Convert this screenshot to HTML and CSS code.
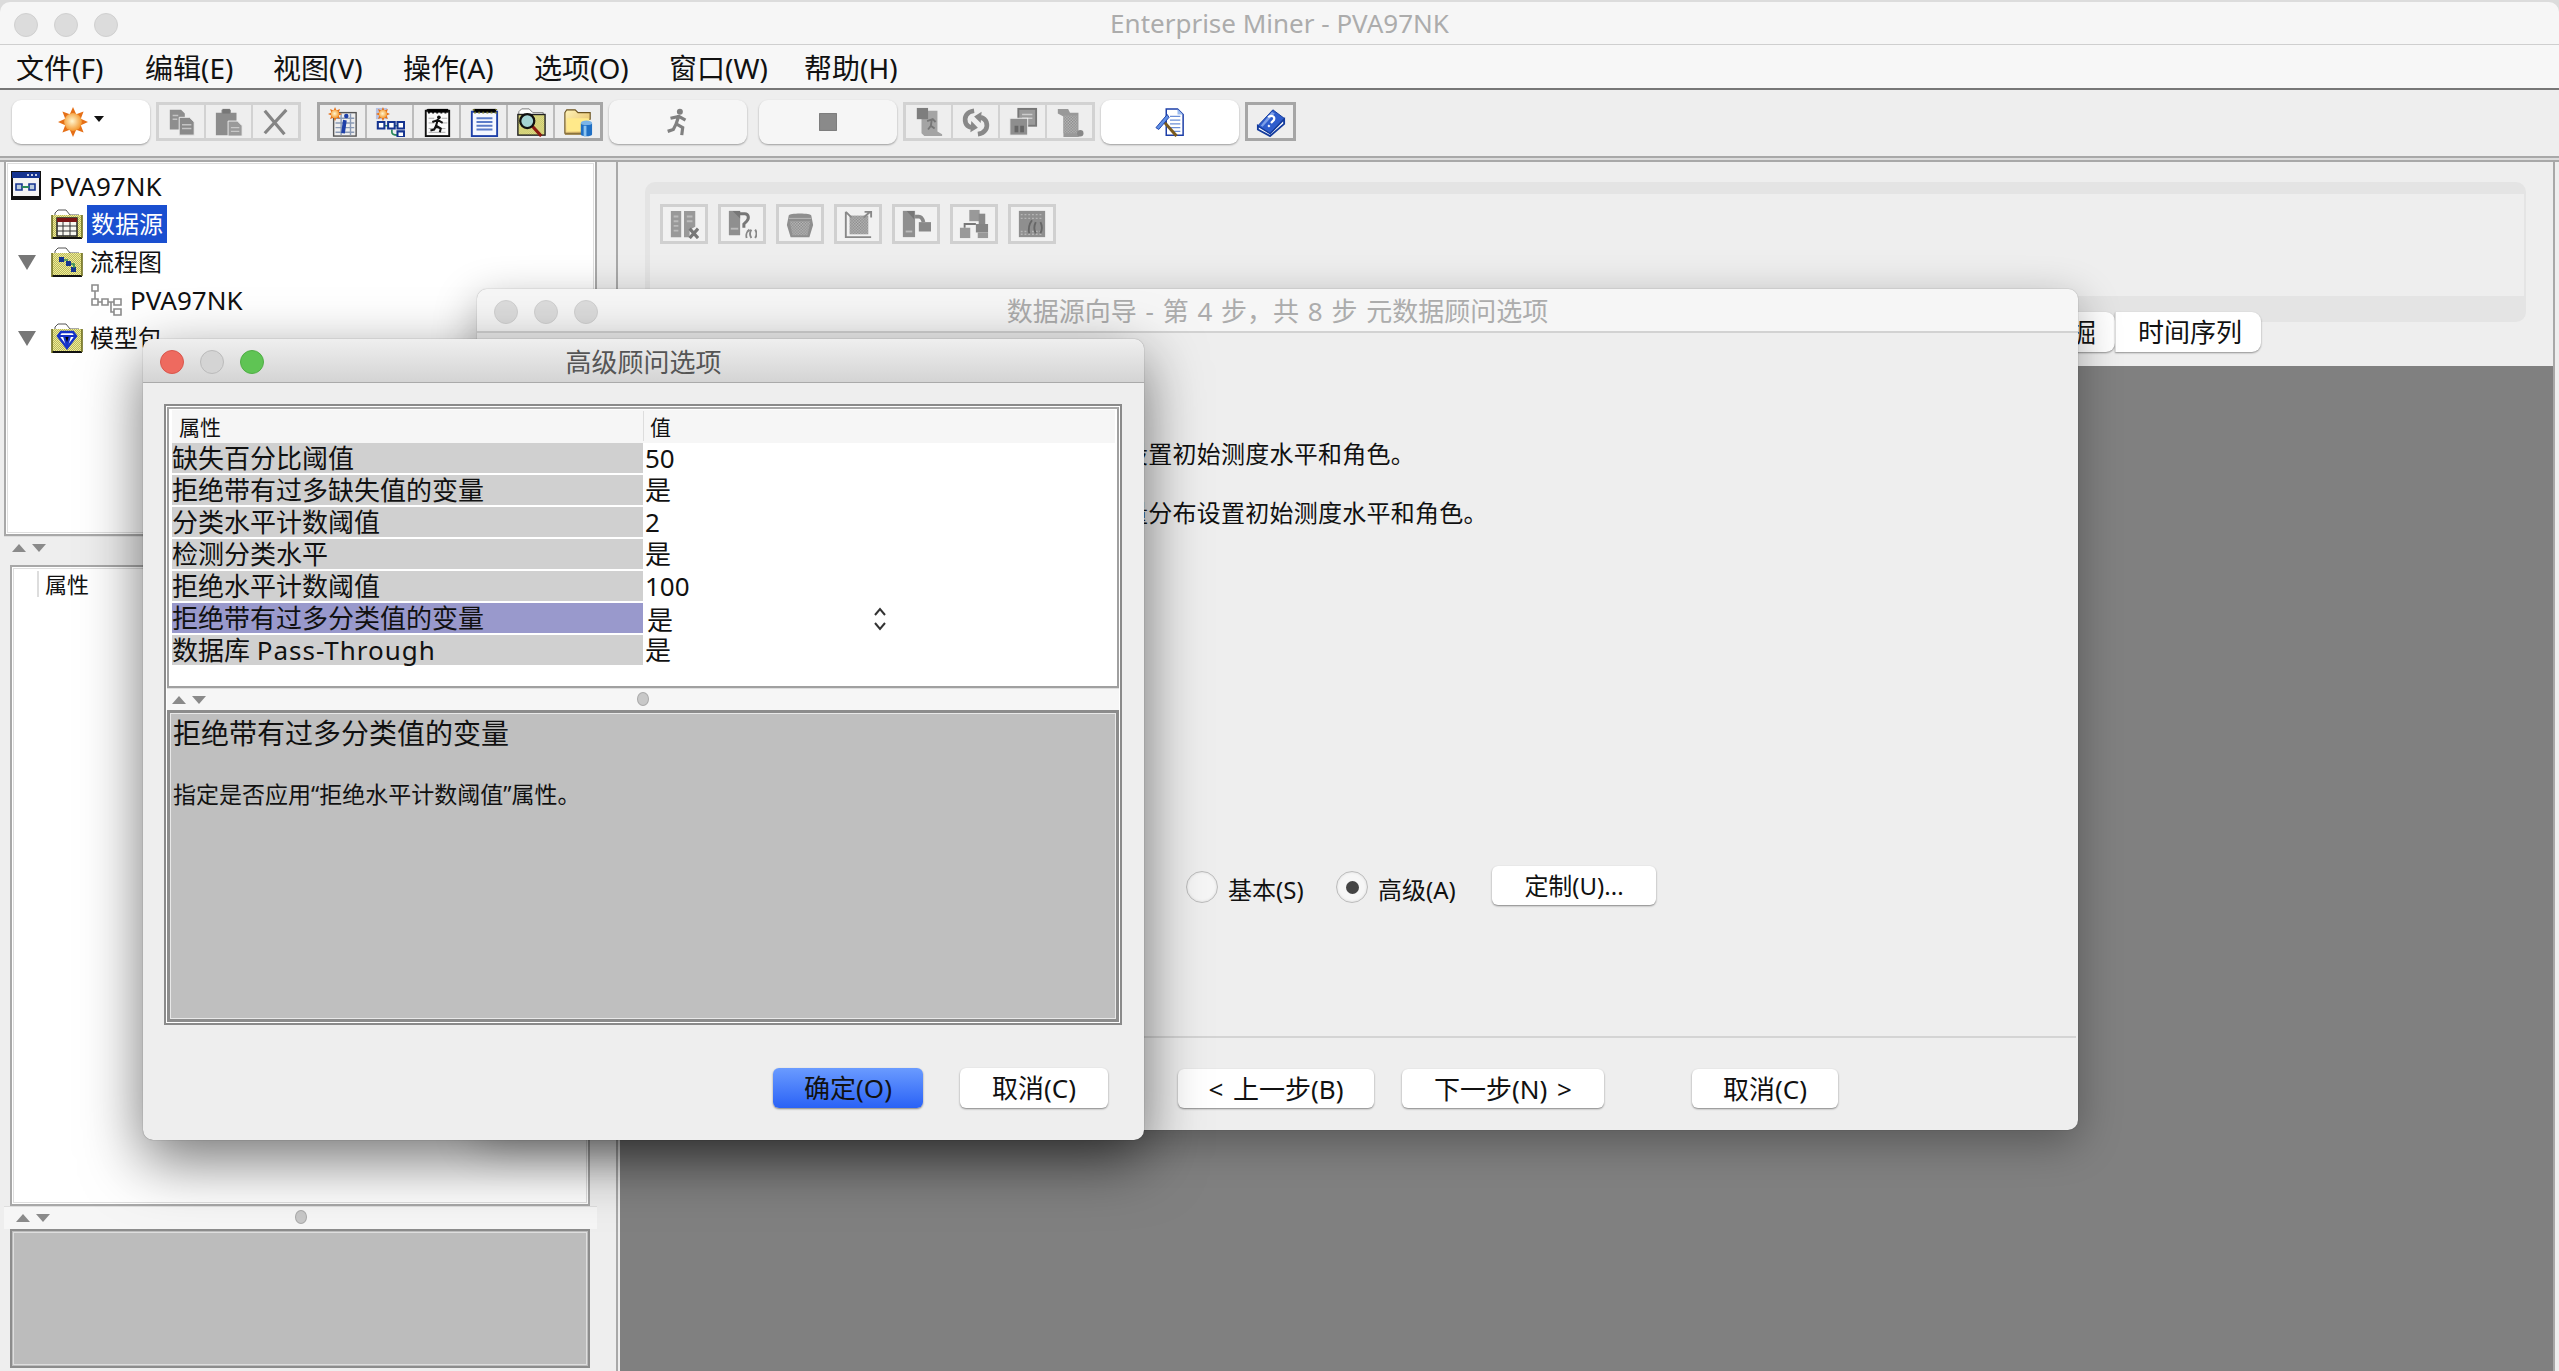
FILE: index.html
```html
<!DOCTYPE html>
<html lang="zh-CN">
<head>
    <meta charset="UTF-8">
    <title>Enterprise Miner - PVA97NK</title>
    <link rel="stylesheet" href="styles.css">
</head>
<body>

<!-- Icon sheet -->
<svg class="icon-sheet" xmlns="http://www.w3.org/2000/svg">
    <defs>
        <radialGradient id="sun-core" cx="45%" cy="45%" r="60%">
            <stop offset="0" stop-color="#fff6cf"/>
            <stop offset="1" stop-color="#f39022"/>
        </radialGradient>
        <linearGradient id="folder-tan" x1="0" y1="0" x2="1" y2="1">
            <stop offset="0" stop-color="#fff3b8"/>
            <stop offset="1" stop-color="#e2b75c"/>
        </linearGradient>
        <pattern id="check-yellow" width="2" height="2" patternUnits="userSpaceOnUse">
            <rect width="2" height="2" fill="#f4f08c"/>
            <rect width="1" height="1" fill="#b4b468"/>
            <rect x="1" y="1" width="1" height="1" fill="#b4b468"/>
        </pattern>
        <pattern id="check-gray" width="3" height="3" patternUnits="userSpaceOnUse">
            <rect width="3" height="3" fill="#bcbcbc"/>
            <rect width="1.5" height="1.5" fill="#868686"/>
            <rect x="1.5" y="1.5" width="1.5" height="1.5" fill="#868686"/>
        </pattern>
    </defs>

    <symbol id="ic-sun" viewBox="0 0 32 32">
        <polygon fill="#e56f17" points="16,0 19.4,7.7 27.3,4.7 24.3,12.6 32,16 24.3,19.4 27.3,27.3 19.4,24.3 16,32 12.6,24.3 4.7,27.3 7.7,19.4 0,16 7.7,12.6 4.7,4.7 12.6,7.7"/>
        <circle cx="16" cy="16" r="9.5" fill="url(#sun-core)"/>
    </symbol>
    <symbol id="ic-copy" viewBox="0 0 32 32">
        <path fill="#8e8e8e" d="M3 3h12l4 4v17H3z"/>
        <path fill="#8a8a8a" stroke="#eee" d="M13 11h11l5 5v14H13z"/>
        <path stroke="#c4c4c4" stroke-width="1.5" d="M16 19h10M16 23h10M6 9h6M6 13h5"/>
    </symbol>
    <symbol id="ic-paste" viewBox="0 0 32 32">
        <path fill="#8c8c8c" d="M2 6h6V3h10v3h6v24H2z"/>
        <rect x="9" y="2" width="8" height="5" fill="#777"/>
        <path fill="#9a9a9a" stroke="#eee" d="M15 15h10l5 5v11H15z"/>
        <path stroke="#c8c8c8" stroke-width="1.5" d="M18 22h9M18 26h9"/>
    </symbol>
    <symbol id="ic-x" viewBox="0 0 32 32">
        <path stroke="#858585" stroke-width="3.4" fill="none" d="M4 4 L25 29M27 3 L4 28"/>
    </symbol>
    <symbol id="ic-run" viewBox="0 0 32 32">
        <circle cx="18" cy="5" r="3.2" fill="currentColor"/>
        <path stroke="currentColor" stroke-width="3.4" fill="none" d="M8 12l9-2 7 4M17 9l-3 9 7 4-1 8M14 18l-3 6-6 2"/>
    </symbol>
    <symbol id="ic-stop" viewBox="0 0 32 32">
        <rect x="7" y="7" width="18" height="18" fill="#8a8a8a" stroke="#777"/>
    </symbol>
    <symbol id="ic-info" viewBox="0 0 32 32">
        <rect x="6" y="6" width="24" height="25" fill="#eee" stroke="#555" stroke-width="1.5"/>
        <path stroke="#8a9ab5" stroke-width="1.5" d="M8 12h20M8 17h20M8 22h20M8 27h20M14 7v23M24 7v23"/>
        <path stroke="#1d3fa8" stroke-width="4" d="M18 14l-2 14"/>
        <circle cx="19.5" cy="9.5" r="2.4" fill="#1d3fa8"/>
        <use href="#ic-sun" x="0" y="0" width="15" height="15"/>
    </symbol>
    <symbol id="ic-flow" viewBox="0 0 32 32">
        <rect x="1" y="1" width="12" height="12" fill="#b7c2e2"/>
        <use href="#ic-sun" x="1" y="0" width="15" height="15"/>
        <path stroke="#2b8a5a" stroke-width="1.8" fill="none" d="M10 20h4M20 20h4M18 24v3c0 2 2 3 6 3"/>
        <path fill="#fff" stroke="#14338f" stroke-width="2.2" d="M3 16h7v7H3zM14 16h7v7h-7zM24 16h7v7h-7zM24 26h7v6h-7z"/>
    </symbol>
    <symbol id="ic-note" viewBox="0 0 32 32">
        <rect x="4" y="4" width="25" height="27" fill="#fbfbfb" stroke="#111" stroke-width="2"/>
        <path stroke="#111" stroke-width="2" stroke-dasharray="2 2.4" d="M6 2v4h22V2"/>
        <path stroke="#aaa" d="M7 12h6M21 12h6M7 17h6M21 17h6M7 23h18M7 27h18"/>
        <circle cx="18" cy="11" r="2" fill="#111"/>
        <path stroke="#111" stroke-width="2.2" fill="none" d="M11 16l6-2 5 3M17 13l-2 7 5 3-1 4M15 20l-2 4-4 1"/>
    </symbol>
    <symbol id="ic-list" viewBox="0 0 32 32">
        <rect x="3" y="5" width="27" height="26" fill="#f4f7ff" stroke="#1d3fa8" stroke-width="2"/>
        <path stroke="#7a7a30" stroke-width="2" stroke-dasharray="2 2.4" d="M5 2v4h24V2"/>
        <path stroke="#5a7bc8" stroke-width="2" d="M8 12h17M8 16h17M8 20h17M8 24h17"/>
    </symbol>
    <symbol id="ic-find" viewBox="0 0 32 32">
        <path fill="#fff" stroke="#777" d="M3 9V5l3-3h8l4 4h11v3z"/>
        <rect x="2" y="8" width="29" height="22" fill="url(#check-yellow)" stroke="#222" stroke-width="1.5"/>
        <path stroke="#8b1a10" stroke-width="3.4" d="M17 20l10 11"/>
        <circle cx="12" cy="15" r="7.5" fill="#a5d4d4" stroke="#111" stroke-width="2.4"/>
    </symbol>
    <symbol id="ic-open" viewBox="0 0 32 32">
        <path fill="url(#folder-tan)" stroke="#6b5320" stroke-width="1.2" d="M2 28V6l2-3h9l3 3h13v7h-2v15z"/>
        <path fill="#ffe98a" d="M4 26V12h24v14z"/>
        <path stroke="#8d6f2a" stroke-width="1.2" d="M2 29h18"/>
        <ellipse cx="25" cy="17" rx="6" ry="2.5" fill="#7ab4e8"/>
        <path fill="#1f6fc4" d="M19 17v12c0 3 12 3 12 0V17c0 3-12 3-12 0z"/>
        <path fill="#8cc4f0" d="M22 20h3v11h-3z"/>
    </symbol>
    <symbol id="ic-g-page" viewBox="0 0 32 32">
        <path fill="#a4a4a4" d="M8 4h17v22l5 3v2H11l-3-3z"/>
        <rect x="3" y="1" width="12" height="12" fill="#7e7e7e"/>
        <path stroke="#777" stroke-width="2" fill="none" d="M14 15l6-2 3 3M19 13l-1 7 4 3M18 20l-3 4"/>
    </symbol>
    <symbol id="ic-g-sync" viewBox="0 0 32 32">
        <path fill="none" stroke="#888" stroke-width="5" d="M14 4C6 5 3 11 5 17c1 3 3 4 6 5M18 29c8-1 11-7 9-13-1-3-3-4-6-5"/>
        <path fill="#888" d="M11 15l7 7-8 5zM21 17l-7-7 8-5z"/>
    </symbol>
    <symbol id="ic-g-win" viewBox="0 0 32 32">
        <rect x="11" y="2" width="19" height="18" fill="#9a9a9a" stroke="#777" stroke-width="2"/>
        <path stroke="#ccc" stroke-width="1.5" d="M15 8h11M15 12h11"/>
        <rect x="2" y="12" width="19" height="18" fill="#8e8e8e" stroke="#eee"/>
        <rect x="7" y="20" width="4" height="7" fill="#666"/>
        <rect x="13" y="20" width="4" height="7" fill="#666"/>
    </symbol>
    <symbol id="ic-g-map" viewBox="0 0 32 32">
        <path fill="#999" d="M3 2h11l2 4h9v22l3 2-3 2H9V10L3 7z"/>
        <path fill="url(#check-gray)" d="M9 9h15v19H9z"/>
        <circle cx="27" cy="28" r="3.4" fill="#888"/>
    </symbol>
    <symbol id="ic-build" viewBox="0 0 32 32">
        <path fill="#fff" stroke="#1d3fa8" stroke-width="1.6" d="M12 2h12l6 6v22H12z"/>
        <path fill="#9cbcf0" d="M24 2v6h6z"/>
        <path stroke="#6b8fd8" stroke-width="1.5" d="M16 10h11M16 14h11M16 18h11M16 22h11M18 26h9"/>
        <path stroke="#7a5a1e" stroke-width="3.2" d="M8 14l15 17"/>
        <path fill="#5f90e6" stroke="#1d3fa8" d="M1 22L13 8l2 3L4 24z"/>
    </symbol>
    <symbol id="ic-help" viewBox="0 0 32 32">
        <path fill="#fff" stroke="#123a9c" stroke-width="2" d="M2 20l13 8 15-15v5L15 31 2 24z"/>
        <path fill="#2f5dcc" stroke="#123a9c" d="M2 20L18 3l12 9-15 16z"/>
        <path fill="#7d9fe8" d="M17 5l3 2-13 14-2-1z"/>
        <path stroke="#fff" stroke-width="2.4" fill="none" d="M13 11c3-3 8-1 6 3l-3 3M13 21l1.500-1.500"/>
    </symbol>
    <symbol id="ic-p-split" viewBox="0 0 32 32">
        <path fill="#999" d="M2 2h11v28H2zM16 2h12v17l-6 3v8h-6z"/>
        <path stroke="#bbb" stroke-width="2" d="M5 8h5M5 13h5M5 18h5M5 23h5M19 8h6M19 13h6"/>
        <path stroke="#777" stroke-width="3.4" d="M22 21l9 10M31 21l-9 10"/>
    </symbol>
    <symbol id="ic-p-fx" viewBox="0 0 32 32">
        <path fill="#8f8f8f" d="M2 2h12v26H2z"/>
        <path fill="#777" d="M6 2h8v8z"/>
        <path stroke="#bbb" stroke-width="2" d="M4 21h8"/>
        <path fill="none" stroke="#777" stroke-width="3.2" d="M13 5h6c4 0 5 5 2 8l-3 3v4"/>
        <path fill="none" stroke="#888" stroke-width="2" d="M21 31c-1-3 0-7 3-9M26 22c-2 3-2 6 0 9M30 22c2 3 2 6 0 9"/>
    </symbol>
    <symbol id="ic-p-pot" viewBox="0 0 32 32">
        <path fill="#8e8e8e" d="M4 7c0-3 24-3 24 0l2 10-4 13H6L2 17z"/>
        <path fill="url(#check-gray)" d="M5 13h22l-3 15H8z"/>
        <path stroke="#bbb" d="M4 10h24"/>
    </symbol>
    <symbol id="ic-p-frame" viewBox="0 0 32 32">
        <path fill="url(#check-gray)" d="M7 7h20v20H7z"/>
        <path stroke="#888" stroke-width="2" fill="none" d="M3 3v27h27M3 3l6 6M29 3l-7 6M23 3h7v6"/>
    </symbol>
    <symbol id="ic-p-move" viewBox="0 0 32 32">
        <path fill="#8f8f8f" d="M2 2h13v28H2z"/>
        <path fill="#777" d="M6 2h8v9z"/>
        <path stroke="#bbb" stroke-width="2" d="M5 24h7"/>
        <path fill="none" stroke="#888" stroke-width="4" d="M15 8h4c3 0 4 2 5 6"/>
        <path fill="#888" d="M19 14h13v10H19z"/>
    </symbol>
    <symbol id="ic-p-nodes" viewBox="0 0 32 32">
        <rect x="11" y="1" width="11" height="12" fill="#999"/>
        <rect x="21" y="5" width="7" height="14" fill="#8a8a8a"/>
        <rect x="1" y="20" width="11" height="11" fill="#999"/>
        <rect x="18" y="16" width="13" height="9" fill="#858585"/>
        <rect x="20" y="25" width="11" height="6" fill="#999"/>
        <path stroke="#777" stroke-width="2" fill="none" d="M6 20v-4h12"/>
    </symbol>
    <symbol id="ic-p-func" viewBox="0 0 32 32">
        <rect x="2" y="2" width="28" height="28" fill="#8f8f8f"/>
        <path stroke="#b5b5b5" stroke-width="1.5" stroke-dasharray="2 2" d="M4 6h24M4 10h24M4 24h24M4 27h24"/>
        <path fill="none" stroke="#666" stroke-width="2" d="M13 26c-1-5 0-10 3-14M20 14c-2 4-2 8 0 12M25 14c2 4 2 8 0 12"/>
    </symbol>
    <symbol id="ic-project" viewBox="0 0 32 32">
        <rect x="1" y="2" width="28" height="27" fill="#f4f4f4" stroke="#111" stroke-width="2"/>
        <rect x="1" y="2" width="28" height="6" fill="#14338f"/>
        <path stroke="#fff" stroke-width="1.4" stroke-dasharray="2 2" d="M16 5h12"/>
        <path stroke="#14338f" stroke-width="1.6" fill="#bcd" d="M5 14h6v6H5zM18 14h6v6h-6z"/>
        <path stroke="#2b8a5a" stroke-width="2" d="M11 17h7"/>
        <path stroke="#111" stroke-width="2" d="M2 27h27"/>
    </symbol>
    <symbol id="ic-folder" viewBox="0 0 32 32">
        <path fill="#fff" stroke="#555" d="M4 8V5l3-3h8l4 5h9v2z"/>
        <rect x="1" y="7" width="30" height="24" fill="url(#check-yellow)"/>
        <path stroke="#111" stroke-width="2" d="M1 30h30"/>
        <path stroke="#6e6e20" stroke-width="1.6" d="M1 7v24M31 7v23"/>
    </symbol>
    <symbol id="ic-data" viewBox="0 0 32 32">
        <use href="#ic-folder" width="32" height="32"/>
        <rect x="6" y="10" width="20" height="18" fill="#f7f7f0" stroke="#222" stroke-width="1.5"/>
        <rect x="6" y="10" width="20" height="4" fill="#7a1616"/>
        <path stroke="#333" d="M6 18h20M6 23h20M12 14v14M19 14v14"/>
    </symbol>
    <symbol id="ic-flowdir" viewBox="0 0 32 32">
        <use href="#ic-folder" width="32" height="32"/>
        <path fill="#14338f" d="M8 11h5v5H8zM15 15h5v5h-5zM20 21h5v5h-5z"/>
        <path stroke="#2b8a5a" stroke-width="1.6" fill="none" d="M13 14h4M20 18h3v4"/>
    </symbol>
    <symbol id="ic-model" viewBox="0 0 32 32">
        <use href="#ic-folder" width="32" height="32"/>
        <path fill="#fff" stroke="#1432c8" stroke-width="2.4" d="M7 14l3-4h12l3 4-9 12z"/>
        <path stroke="#1432c8" stroke-width="2.2" d="M7 14h18M13 14l3 10 3-10"/>
    </symbol>
    <symbol id="ic-diagram" viewBox="0 0 32 32">
        <path fill="#fff" stroke="#8c8c8c" stroke-width="1.6" d="M1 1h6v6H1zM1 15h6v6H1zM11 15h6v6h-6zM23 15h7v6h-7zM23 25h7v6h-7z"/>
        <path stroke="#8c8c8c" stroke-width="1.6" fill="none" d="M4 7v8M7 18h4M17 18h6M20 18v10h3"/>
    </symbol>
</svg>

<div class="app">
    <div class="app-title">
        <div class="lights">
            <span class="light"></span><span class="light"></span><span class="light"></span>
        </div>
        <span class="title-text">Enterprise Miner - PVA97NK</span>
    </div>

    <nav class="menubar">
        <span class="menu-item">文件(F)</span>
        <span class="menu-item">编辑(E)</span>
        <span class="menu-item">视图(V)</span>
        <span class="menu-item">操作(A)</span>
        <span class="menu-item">选项(O)</span>
        <span class="menu-item">窗口(W)</span>
        <span class="menu-item">帮助(H)</span>
    </nav>

    <div class="toolbar">
        <div class="pill pill-on">
            <svg class="pill-icon"><use href="#ic-sun"/></svg><span class="drop-arrow"></span>
        </div>
        <div class="tool-group">
            <span class="tool"><svg><use href="#ic-copy"/></svg></span>
            <span class="tool"><svg><use href="#ic-paste"/></svg></span>
            <span class="tool"><svg><use href="#ic-x"/></svg></span>
        </div>
        <div class="tool-group tool-group-on group-gap">
            <span class="tool"><svg><use href="#ic-info"/></svg></span>
            <span class="tool"><svg><use href="#ic-flow"/></svg></span>
            <span class="tool"><svg><use href="#ic-note"/></svg></span>
            <span class="tool"><svg><use href="#ic-list"/></svg></span>
            <span class="tool"><svg><use href="#ic-find"/></svg></span>
            <span class="tool"><svg><use href="#ic-open"/></svg></span>
        </div>
        <div class="pill"><svg class="pill-icon run-icon"><use href="#ic-run"/></svg></div>
        <div class="pill pill-gap"><svg class="pill-icon"><use href="#ic-stop"/></svg></div>
        <div class="tool-group">
            <span class="tool"><svg><use href="#ic-g-page"/></svg></span>
            <span class="tool"><svg><use href="#ic-g-sync"/></svg></span>
            <span class="tool"><svg><use href="#ic-g-win"/></svg></span>
            <span class="tool"><svg><use href="#ic-g-map"/></svg></span>
        </div>
        <div class="pill pill-on"><svg class="pill-icon"><use href="#ic-build"/></svg></div>
        <div class="tool-group tool-group-on">
            <span class="tool"><svg><use href="#ic-help"/></svg></span>
        </div>
    </div>

    <div class="workspace">
        <!-- Left side: project tree, properties, help -->
        <aside class="side">
            <div class="pane tree-pane">
                <div class="tree-row">
                    <svg class="tree-icon"><use href="#ic-project"/></svg>
                    <span class="tree-label tree-latin">PVA97NK</span>
                </div>
                <div class="tree-row indent-1">
                    <svg class="tree-icon"><use href="#ic-data"/></svg>
                    <span class="tree-label selected">数据源</span>
                </div>
                <div class="tree-row">
                    <span class="twist"></span>
                    <svg class="tree-icon"><use href="#ic-flowdir"/></svg>
                    <span class="tree-label">流程图</span>
                </div>
                <div class="tree-row indent-2">
                    <svg class="tree-icon"><use href="#ic-diagram"/></svg>
                    <span class="tree-label tree-latin">PVA97NK</span>
                </div>
                <div class="tree-row">
                    <span class="twist"></span>
                    <svg class="tree-icon"><use href="#ic-model"/></svg>
                    <span class="tree-label">模型包</span>
                </div>
            </div>
            <div class="split split-side">
                <span class="arrow-up"></span><span class="arrow-down"></span>
            </div>
            <div class="pane props-pane">
                <div class="props-head"><span class="props-title">属性</span></div>
            </div>
            <div class="split split-side split-low">
                <span class="arrow-up"></span><span class="arrow-down"></span>
                <span class="knob"></span>
            </div>
            <div class="pane help-pane"></div>
        </aside>

        <!-- Right side: node palette, tabs, diagram -->
        <main class="main">
            <div class="palette">
                <div class="palette-inner">
                    <span class="pal-btn"><svg><use href="#ic-p-split"/></svg></span>
                    <span class="pal-btn"><svg><use href="#ic-p-fx"/></svg></span>
                    <span class="pal-btn"><svg><use href="#ic-p-pot"/></svg></span>
                    <span class="pal-btn"><svg><use href="#ic-p-frame"/></svg></span>
                    <span class="pal-btn"><svg><use href="#ic-p-move"/></svg></span>
                    <span class="pal-btn"><svg><use href="#ic-p-nodes"/></svg></span>
                    <span class="pal-btn"><svg><use href="#ic-p-func"/></svg></span>
                </div>
            </div>
            <div class="tabs">
                <span class="tab">数据挖掘</span>
                <span class="tab">时间序列</span>
            </div>
            <div class="diagram"></div>
        </main>
    </div>
</div>

<!-- Wizard window -->
<section class="window wizard">
    <div class="win-title win-title-off">
        <div class="lights">
            <span class="light"></span><span class="light"></span><span class="light"></span>
        </div>
        <span class="title-text">数据源向导 - 第 4 步，共 8 步 元数据顾问选项</span>
    </div>
    <div class="wizard-body">
        <p class="wizard-line">设置初始测度水平和角色。</p>
        <p class="wizard-line">量分布设置初始测度水平和角色。</p>
        <div class="radio-row">
            <span class="radio"></span><span class="radio-label">基本(S)</span>
            <span class="radio radio-on"></span><span class="radio-label">高级(A)</span>
            <span class="btn btn-custom">定制(U)...</span>
        </div>
    </div>
    <div class="wizard-foot">
        <span class="btn btn-back">&lt; 上一步(B)</span>
        <span class="btn btn-next">下一步(N) &gt;</span>
        <span class="btn btn-cancel">取消(C)</span>
    </div>
</section>

<!-- Advanced options dialog -->
<section class="window advanced">
    <div class="win-title">
        <div class="lights">
            <span class="light light-red"></span><span class="light light-off"></span><span class="light light-green"></span>
        </div>
        <span class="title-text">高级顾问选项</span>
    </div>
    <div class="adv-body">
        <div class="frame">
            <div class="prop-table">
                <div class="prop-head">
                    <span class="head-cell">属性</span>
                    <span class="head-cell head-value">值</span>
                </div>
                <div class="prop-row"><span class="prop-name">缺失百分比阈值</span><span class="prop-value">50</span></div>
                <div class="prop-row"><span class="prop-name">拒绝带有过多缺失值的变量</span><span class="prop-value">是</span></div>
                <div class="prop-row"><span class="prop-name">分类水平计数阈值</span><span class="prop-value">2</span></div>
                <div class="prop-row"><span class="prop-name">检测分类水平</span><span class="prop-value">是</span></div>
                <div class="prop-row"><span class="prop-name">拒绝水平计数阈值</span><span class="prop-value">100</span></div>
                <div class="prop-row prop-row-on">
                    <span class="prop-name">拒绝带有过多分类值的变量</span>
                    <span class="prop-value prop-combo">
                        <span class="combo-text">是</span>
                        <svg class="combo-arrows" viewBox="0 0 14 26"><path fill="none" stroke="#333" stroke-width="2" d="M2 9l5-6 5 6M2 17l5 6 5-6"/></svg>
                    </span>
                </div>
                <div class="prop-row"><span class="prop-name">数据库 <span class="latin">Pass-Through</span></span><span class="prop-value">是</span></div>
            </div>
            <div class="split split-adv">
                <span class="arrow-up"></span><span class="arrow-down"></span>
                <span class="knob"></span>
            </div>
            <div class="desc">
                <h4 class="desc-title">拒绝带有过多分类值的变量</h4>
                <p class="desc-text">指定是否应用“拒绝水平计数阈值”属性。</p>
            </div>
        </div>
        <div class="adv-foot">
            <span class="btn btn-primary">确定(O)</span>
            <span class="btn btn-adv-cancel">取消(C)</span>
        </div>
    </div>
</section>

</body>
</html>
```

FILE: styles.css
```css
/* General */
* {
    box-sizing: border-box;
}

html, body {
    margin: 0;
    padding: 0;
    height: 100%;
    overflow: hidden;
}

body {
    background: #dcdcdc;
    color: #111;
    font-family: "Noto Sans", "Noto Sans CJK SC", sans-serif;
    font-size: 24px;
    position: relative;
}

.icon-sheet {
    position: absolute;
    width: 0;
    height: 0;
}

svg {
    display: block;
}

.app {
    display: flex;
    flex-direction: column;
    height: 100%;
    padding-top: 2px;
}

/* Title bars */
.app-title {
    height: 43px;
    flex: none;
    display: flex;
    align-items: center;
    justify-content: center;
    position: relative;
    background: #f6f6f6;
    border-bottom: 1px solid #cfcfcf;
    border-radius: 10px 10px 0 0;
}

.lights {
    position: absolute;
    left: 14px;
    top: 11px;
    display: flex;
    gap: 16px;
}

.light {
    width: 24px;
    height: 24px;
    border-radius: 50%;
    background: #dcdcdc;
    border: 1px solid #d0d0d0;
}

.light-red {
    background: #ee6a5f;
    border-color: #d9564c;
}

.light-off {
    background: #d4d4d4;
    border-color: #bbb;
}

.light-green {
    background: #5fc454;
    border-color: #4fae45;
}

.title-text {
    color: #acacac;
    font-size: 26px;
}

/* Menu */
.menubar {
    height: 45px;
    flex: none;
    display: flex;
    align-items: center;
    background: #f7f7f7;
    border-bottom: 2px solid #777;
    padding-left: 16px;
}

.menu-item {
    font-size: 28px;
    width: 131px;
}

.menu-item:nth-child(1) { width: 129px; }
.menu-item:nth-child(2) { width: 128px; }
.menu-item:nth-child(3) { width: 130px; }
.menu-item:nth-child(5) { width: 135px; }
.menu-item:nth-child(6) { width: 135px; }

/* Toolbar */
.toolbar {
    height: 68px;
    flex: none;
    display: flex;
    align-items: flex-start;
    gap: 6px;
    padding: 10px 0 0 12px;
    background: #eee;
    border-bottom: 2px solid #a8a8a8;
}

.pill {
    width: 138px;
    height: 44px;
    display: flex;
    align-items: center;
    justify-content: center;
    background: #f6f6f6;
    border-radius: 9px;
    box-shadow: 0 1px 2px rgba(0, 0, 0, 0.35);
}

.pill-on {
    background: #fff;
}

.pill-gap {
    margin-left: 6px;
}

.pill-icon {
    width: 30px;
    height: 30px;
}

.run-icon {
    color: #808080;
}

.drop-arrow {
    width: 0;
    height: 0;
    margin-left: 6px;
    margin-bottom: 6px;
    border-left: 5px solid transparent;
    border-right: 5px solid transparent;
    border-top: 6px solid #111;
}

.tool-group {
    display: flex;
    gap: 2px;
    margin-top: 2px;
    border: 3px solid #d2d2d2;
    background: #d2d2d2;
}

.tool-group-on {
    border-color: #a6a6a6;
    background: #bdbdbd;
}

.group-gap {
    margin-left: 10px;
}

.tool {
    width: 45px;
    height: 33px;
    display: flex;
    align-items: center;
    justify-content: center;
    background: #eee;
}

.tool svg {
    width: 30px;
    height: 30px;
}

/* Workspace */
.workspace {
    flex: 1;
    min-height: 0;
    display: flex;
    background: #eee;
    border-top: 2px solid #a8a8a8;
    margin-top: 2px;
}

.side {
    width: 593px;
    margin-left: 4px;
    margin-top: -2px;
    display: flex;
    flex-direction: column;
    padding-bottom: 3px;
}

.pane {
    border: 2px solid #a8a8a8;
    outline: 1px solid #dedede;
    outline-offset: -4px;
    background: #fff;
}

.tree-pane {
    height: 376px;
    padding: 5px 0 0 5px;
}

.tree-row {
    height: 38px;
    display: flex;
    align-items: center;
    padding-left: 40px;
}

.tree-row:first-child {
    padding-left: 0;
}

.tree-row:first-child .tree-label {
    margin-left: 4px;
}

.indent-2 {
    padding-left: 80px;
}

.tree-icon {
    width: 32px;
    height: 32px;
    flex: none;
}

.tree-label {
    margin-left: 5px;
    padding: 0 2px;
    line-height: 38px;
    font-size: 24px;
}

.tree-latin {
    font-size: 26px;
}

.selected {
    margin-left: 4px;
    padding: 0 4px;
    background: #1a4fd0;
    color: #fff;
}

.twist {
    width: 0;
    height: 0;
    margin-left: -33px;
    margin-right: 15px;
    border-left: 9px solid transparent;
    border-right: 9px solid transparent;
    border-top: 15px solid #777;
}

/* Splitters */
.split {
    display: flex;
    align-items: center;
    gap: 6px;
    position: relative;
    background: #f6f6f6;
    border-top: 1px solid #dedede;
}

.split-side {
    height: 29px;
    padding: 0 0 6px 8px;
    background: #eee;
}

.split-low {
    height: 23px;
    padding: 0 0 0 12px;
    background: #f6f6f6;
}

.arrow-up, .arrow-down {
    width: 0;
    height: 0;
    border-left: 7px solid transparent;
    border-right: 7px solid transparent;
}

.arrow-up {
    border-bottom: 8px solid #8a8a8a;
}

.arrow-down {
    border-top: 8px solid #8a8a8a;
}

.knob {
    position: absolute;
    left: calc(50% - 6px);
    top: 3px;
    width: 12px;
    height: 14px;
    border-radius: 50%;
    background: #c8c8c8;
    border: 1px solid #aaa;
}

.props-pane {
    height: 641px;
    margin-left: 6px;
    margin-right: 7px;
}

.props-head {
    padding: 0 0 0 25px;
}

.props-title {
    display: inline-block;
    border-left: 2px solid #ddd;
    padding-left: 6px;
    font-size: 22px;
    line-height: 26px;
}

.split-low + .help-pane {
    margin-left: 6px;
}

.help-pane {
    flex: 1;
    margin-right: 7px;
    background: #bcbcbc;
    border-color: #8c8c8c;
}

/* Main area */
.main {
    flex: 1;
    min-width: 0;
    margin: 0 4px 0 19px;
    display: flex;
    flex-direction: column;
    border-left: 2px solid #a8a8a8;
    border-right: 2px solid #a8a8a8;
}

.palette {
    height: 140px;
    flex: none;
    margin: 20px 27px 0 27px;
    padding: 12px 2px 26px 5px;
    background: #e4e4e4;
    border-radius: 10px;
}

.palette-inner {
    height: 102px;
    display: flex;
    align-items: flex-start;
    gap: 10px;
    padding: 10px 0 0 10px;
    background: #eee;
}

.pal-btn {
    width: 48px;
    height: 40px;
    display: flex;
    align-items: center;
    justify-content: center;
    background: #f1f1f1;
    border: 3px solid #d0d0d0;
}

.pal-btn svg {
    width: 30px;
    height: 30px;
}

.tabs {
    height: 40px;
    flex: none;
    display: flex;
    justify-content: flex-end;
    margin-top: -10px;
    padding-right: 292px;
    position: relative;
}

.tab {
    width: 146px;
    display: flex;
    align-items: center;
    justify-content: center;
    padding: 0 0 3px 3px;
    background: #fff;
    font-size: 26px;
    border-left: 1px solid #ddd;
    border-radius: 0 9px 9px 0;
    box-shadow: 0 1px 2px rgba(0, 0, 0, 0.4);
}

.diagram {
    flex: 1;
    margin-top: 14px;
    margin-left: 2px;
    background: #808080;
}

/* Windows */
.window {
    position: absolute;
    display: flex;
    flex-direction: column;
    background: #eee;
    border-radius: 10px;
}

.wizard {
    left: 477px;
    top: 289px;
    width: 1601px;
    height: 841px;
    box-shadow: 0 12px 44px rgba(0, 0, 0, 0.32), 0 0 1px rgba(0, 0, 0, 0.5);
}

.advanced {
    left: 143px;
    top: 339px;
    width: 1001px;
    height: 801px;
    box-shadow: 0 20px 60px rgba(0, 0, 0, 0.55), 0 0 1px rgba(0, 0, 0, 0.6);
}

.win-title {
    height: 44px;
    flex: none;
    display: flex;
    align-items: center;
    justify-content: center;
    position: relative;
    background: linear-gradient(#efefef, #d4d4d4);
    border-bottom: 1px solid #aaa;
    border-radius: 10px 10px 0 0;
}

.win-title .title-text {
    color: #555;
    font-size: 26px;
}

.win-title .lights {
    left: 17px;
    top: 11px;
}

.win-title-off {
    background: #f6f6f6;
    border-bottom: 2px solid #d2d2d2;
}

.win-title-off .title-text {
    color: #acacac;
    font-size: 26px;
    word-spacing: 2px;
}

.win-title-off .lights {
    left: 17px;
}

/* Wizard */
.wizard-body {
    flex: 1;
    padding: 104px 0 0 647px;
    border-bottom: 2px solid #d4d4d4;
    margin-right: 2px;
}

.wizard-line {
    margin: 0 0 26px;
    line-height: 33px;
    font-size: 24px;
    letter-spacing: 0.25px;
}

.radio-row {
    display: flex;
    align-items: center;
    margin: 339px 0 0 -447px;
    position: relative;
}

.radio {
    width: 32px;
    height: 32px;
    flex: none;
    display: flex;
    align-items: center;
    justify-content: center;
    background: #f6f6f6;
    border: 1px solid #bbb;
    border-radius: 50%;
    box-shadow: inset 0 0 3px rgba(0, 0, 0, 0.12);
}

.radio:first-child {
    margin-left: 509px;
}

.radio-on::after {
    content: "";
    width: 13px;
    height: 13px;
    border-radius: 50%;
    background: #444;
}

.radio-label {
    width: 118px;
    padding-left: 10px;
    margin-top: 3px;
    font-size: 24px;
}

.radio-label:nth-of-type(4) {
    width: 124px;
}

.btn {
    height: 39px;
    display: flex;
    align-items: center;
    justify-content: center;
    padding-bottom: 2px;
    background: #fff;
    font-size: 26px;
    word-spacing: 3px;
    border-radius: 6px;
    box-shadow: 0 1px 2px rgba(0, 0, 0, 0.45);
}

.btn-custom {
    width: 164px;
    margin-top: -4px;
    font-size: 24px;
}

.wizard-foot {
    height: 92px;
    flex: none;
    display: flex;
    padding: 31px 0 0 701px;
}

.btn-back {
    width: 196px;
    margin-right: 28px;
}

.btn-next {
    width: 202px;
    margin-right: 88px;
}

.btn-cancel {
    width: 146px;
}

/* Advanced dialog */
.adv-body {
    flex: 1;
    display: flex;
    flex-direction: column;
    padding: 21px 22px 0 21px;
}

.frame {
    height: 621px;
    flex: none;
    display: flex;
    flex-direction: column;
    border: 2px solid #8a8a8a;
    padding: 1px;
    background: #fff;
}

.prop-table {
    height: 281px;
    flex: none;
    padding: 1px 2px 0 3px;
    background: #fff;
    border: 2px solid #a0a0a0;
    border-top-color: #a8a8a8;
}

.prop-head {
    height: 33px;
    display: grid;
    grid-template-columns: 471px 1fr;
    align-items: center;
    padding-bottom: 2px;
    background: #f6f6f6;
    font-size: 21px;
}

.head-cell {
    padding-left: 7px;
}

.head-value {
    padding-left: 6px;
    border-left: 1px solid #ddd;
}

.prop-row {
    height: 30px;
    margin-bottom: 2px;
    display: grid;
    grid-template-columns: 471px 1fr;
    font-size: 26px;
    line-height: 30px;
}

.prop-name {
    background: #d0d0d0;
    white-space: nowrap;
}

.latin {
    letter-spacing: 1px;
}

.prop-value {
    padding-left: 2px;
}

.prop-row-on .prop-name {
    background: #9999cc;
}

.prop-combo {
    display: flex;
    align-items: center;
    padding: 0 0 0 4px;
}

.combo-text {
    width: 226px;
    line-height: 26px;
    margin-top: 3px;
}

.combo-arrows {
    width: 14px;
    height: 26px;
    margin-top: 2px;
}

.split-adv {
    height: 22px;
    flex: none;
    padding-left: 5px;
}

.desc {
    flex: 1;
    padding: 0 0 0 3px;
    background: #bfbfbf;
    border: 3px solid #8c8c8c;
    outline: 1px solid #e8e8e8;
    outline-offset: -4px;
}

.desc-title {
    margin: 0;
    font-size: 28px;
    font-weight: normal;
    line-height: 40px;
}

.desc-text {
    margin: 25px 0 0;
    font-size: 23px;
    line-height: 32px;
}

.adv-foot {
    display: flex;
    justify-content: flex-end;
    gap: 37px;
    padding: 43px 14px 0 0;
}

.btn-primary {
    width: 150px;
    height: 40px;
    background: linear-gradient(#6a9bff, #2a62f6);
}

.btn-adv-cancel {
    width: 148px;
    height: 40px;
}
```
